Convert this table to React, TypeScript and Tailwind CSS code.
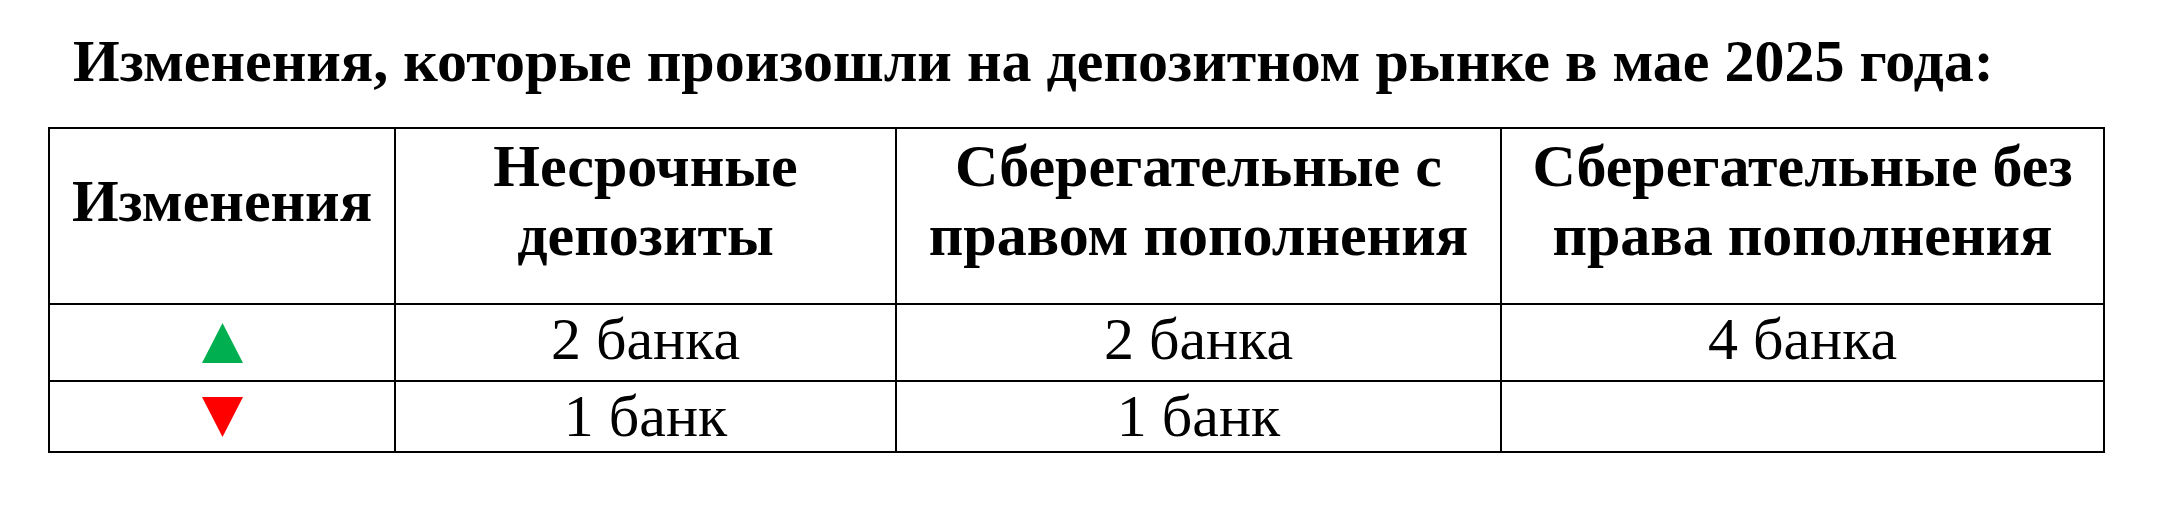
const up = (
  <svg width="41" height="40" viewBox="0 0 41 40" className="mx-auto block">
    <polygon points="20.5,0 41,40 0,40" fill="#00b050" />
  </svg>
);

const down = (
  <svg width="41" height="40" viewBox="0 0 41 40" className="mx-auto block">
    <polygon points="0,0 41,0 20.5,40" fill="#ff0000" />
  </svg>
);

const head = "border-2 border-black text-center align-middle pb-[30px] font-bold";
const cell = "border-2 border-black text-center align-top p-0";

export default function App() {
  return (
    <div className="min-h-screen bg-white text-black pl-[48px] pt-[27px] font-['Liberation_Serif','Times_New_Roman',serif] text-[60px] leading-[69px]">
      <h1 className="pl-[25px] font-bold">
        Изменения, которые произошли на депозитном рынке в мае 2025 года:
      </h1>
      <table className="mt-[31px] w-[2055px] table-fixed border-collapse">
        <colgroup>
          <col className="w-[346px]" />
          <col className="w-[501px]" />
          <col className="w-[605px]" />
          <col className="w-[603px]" />
        </colgroup>
        <tbody>
          <tr className="h-[176px]">
            <td className={head}>Изменения</td>
            <td className={head}>
              Несрочные
              <br />
              депозиты
            </td>
            <td className={head}>
              Сберегательные с
              <br />
              правом пополнения
            </td>
            <td className={head}>
              Сберегательные без
              <br />
              права пополнения
            </td>
          </tr>
          <tr className="h-[77px]">
            <td className="border-2 border-black align-middle p-0">{up}</td>
            <td className={cell}>2 банка</td>
            <td className={cell}>2 банка</td>
            <td className={cell}>4 банка</td>
          </tr>
          <tr className="h-[70px]">
            <td className="border-2 border-black align-middle p-0">{down}</td>
            <td className={cell}>1 банк</td>
            <td className={cell}>1 банк</td>
            <td className={cell}></td>
          </tr>
        </tbody>
      </table>
    </div>
  );
}
